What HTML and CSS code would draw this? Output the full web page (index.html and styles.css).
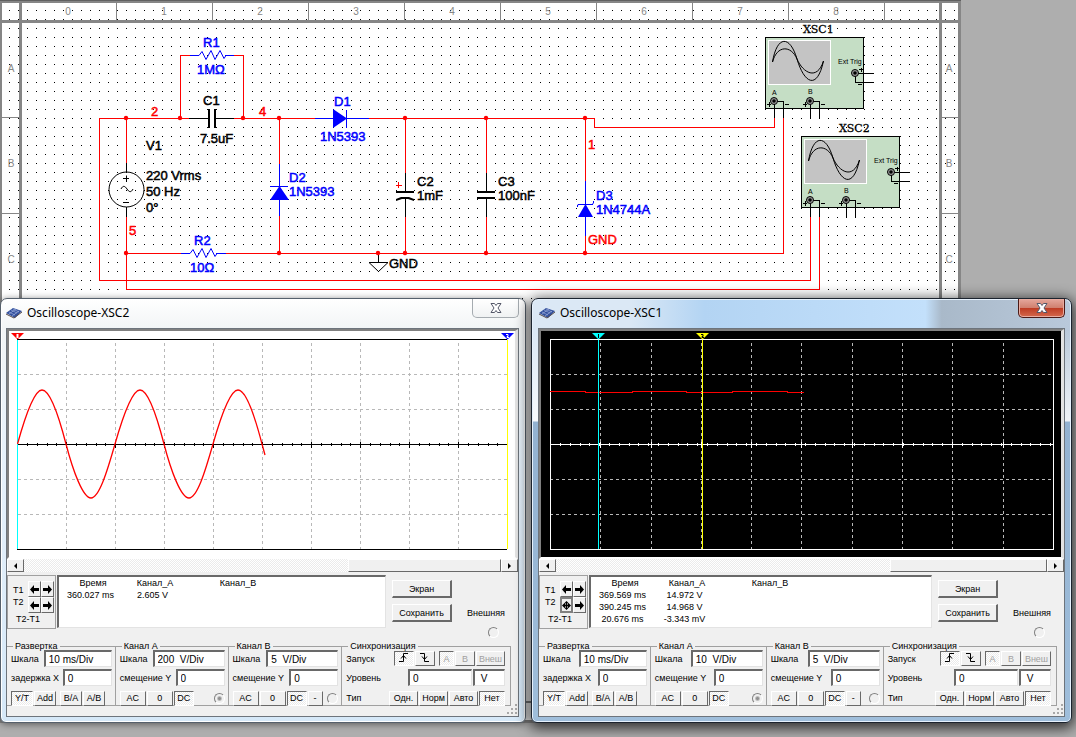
FILE: index.html
```
<!DOCTYPE html>
<html lang="ru">
<head>
    <meta charset="UTF-8">
    <title>Oscilloscope</title>
    <link rel="stylesheet" href="styles.css">
</head>
<body>

<main class="desktop">
    <!-- schematic sheet -->
    <svg class="sheet" width="961" height="723" viewBox="0 0 961 723">
        <defs>
            <pattern id="dots" x="-4" y="-4" width="9" height="9" patternUnits="userSpaceOnUse">
                <rect x="4" y="5" width="1" height="1" fill="#000" shape-rendering="crispEdges"/>
            </pattern>
            <g id="probe">
                <circle r="3.5" fill="#999" stroke="#000"/>
                <circle r="1.8" fill="#000"/>
            </g>
            <g id="scope">
                <rect x="0.5" y="0.5" width="98" height="71" fill="#c5dec5" stroke="#000"/>
                <rect x="3.5" y="3.5" width="62" height="44" fill="#c4c4c4" stroke="#fff"/>
                <path class="curve" d="M7.5 25 C12 -2 25 -2 32 22 S52 54 58.5 24"/>
                <path class="curve" d="M7.5 25 C12 8 26 8 32 22 S52 44 58.5 24"/>
                <path class="pin" d="M9.5 64V81M9 64.5H18.5V81M45.5 64V82M45 64.5H54.5V82M90 36.5H109M90.5 36V45.5H109"/>
                <use href="#probe" x="9" y="64"/>
                <use href="#probe" x="45" y="64"/>
                <use href="#probe" x="90" y="36"/>
                <path class="pin" d="M2 67.5h4M4.5 65v5M20 67.5h4M38 67.5h4M40.5 65v5M56 67.5h4M94 32.5h4M96.5 31v4M93 47.5h4"/>
                <text class="tiny" x="7" y="58">A</text>
                <text class="tiny" x="43" y="57">B</text>
                <text class="tiny" x="73" y="27">Ext Trig</text>
            </g>
        </defs>

        <rect width="961" height="723" fill="#868686"/>
        <rect x="2" y="3" width="17" height="17" fill="#fff"/>
        <rect x="22" y="3" width="917" height="17" fill="#fff"/>
        <rect x="942" y="3" width="16" height="17" fill="#fff"/>
        <rect x="2" y="23" width="17" height="678" fill="#fff"/>
        <rect x="22" y="23" width="917" height="678" fill="#fff"/>
        <rect x="942" y="23" width="16" height="678" fill="#fff"/>
        <rect x="2" y="703" width="956" height="17" fill="#fff"/>
        <rect x="2" y="3" width="956" height="717" fill="url(#dots)"/>
        <path class="frame" d="M20.5 3V720M940.5 3V720M2 21.5H958"/>
        <path class="tick" d="M116.5 3V20M212.5 3V20M308.5 3V20M404.5 3V20M500.5 3V20M596.5 3V20M692.5 3V20M788.5 3V20M884.5 3V20M2 117.5H19M2 213.5H19M942 117.5H958M942 213.5H958"/>
        <rect width="961" height="1" fill="#606060"/>

        <g class="ruler">
            <text x="68" y="15">0</text><text x="164" y="15">1</text><text x="260" y="15">2</text>
            <text x="356" y="15">3</text><text x="452" y="15">4</text><text x="548" y="15">5</text>
            <text x="644" y="15">6</text><text x="740" y="15">7</text><text x="836" y="15">8</text>
            <text x="11" y="72">A</text><text x="11" y="167">B</text><text x="11" y="263">C</text>
            <text x="949" y="72">A</text><text x="949" y="167">B</text><text x="949" y="263">C</text>
        </g>

        <!-- wires -->
        <path class="wire red" d="M189 118.5H99.5V280.5H810.5V217M126.5 118V163M126.5 217V289.5H819.5V217M126 253.5H181M226 253.5H783.5V117M180.5 118V55.5H190M234 55.5H243.5V118M234 118.5H315M369 118.5H594.5V127.5H774.5V117M279.5 118V164M279.5 216V253M405.5 118V173M405.5 217V253M486.5 118V173M486.5 217V253M585.5 118V181M585.5 236V253"/>
        <path class="wire blue" d="M190 55.5H199M225 55.5H234M181 253.5H190M216 253.5H226M315 118.5H369M279.5 164V216M585.5 181V236M346.5 110V128M270 186.5H288M578 204.5H593"/>
        <path class="wire black" d="M189 118.5H208M216 118.5H234M126.5 163V172M126.5 207V217M405.5 173V191M405.5 199V217M486.5 173V191M486.5 199V217M378.5 254V262"/>
        <path class="thin blue" d="M199 55.5l3-4 4 8 5-9 4 9 5-9 4 8 2-3M190 253.5l3-4 4 8 5-9 4 9 5-9 4 8 2-3M577.5 207V205L579 204.5M592 204.5L593.5 203V201"/>
        <path fill="#00f" d="M333 109L347 118.5L333 128ZM279.500 186L289 200H270ZM585.500 204L593 217H578Z"/>
        <path fill="#000" d="M208 109h2v19h-2zM214 109h2v19h-2zM396 191h18v2h-18zM477 191h18v2h-18zM477 197h18v2h-18zM396 201v-2l5-2h8l5 2v2l-6-2h-6z"/>
        <circle class="thin black" cx="126.500" cy="189.500" r="17.500"/>
        <path class="thin black" d="M123 178.500h6M126.500 175.500v6M123 202.500h6M121 189c2-4 4-3 6 0s4 4 6 0M369 262.500H388L378.500 271.500Z"/>
        <path class="wire red" d="M396 185.500h6M398.500 182v6"/>
        <g fill="#f00">
            <circle cx="126" cy="118" r="2.200"/><circle cx="180" cy="118" r="2.200"/><circle cx="243" cy="118" r="2.200"/>
            <circle cx="279" cy="118" r="2.200"/><circle cx="405" cy="118" r="2.200"/><circle cx="486" cy="118" r="2.200"/>
            <circle cx="585" cy="118" r="2.200"/><circle cx="126" cy="253" r="2.200"/><circle cx="279" cy="253" r="2.200"/>
            <circle cx="378" cy="253" r="2.200"/><circle cx="405" cy="253" r="2.200"/><circle cx="486" cy="253" r="2.200"/>
            <circle cx="585" cy="253" r="2.200"/>
        </g>

        <g class="part part-blue">
            <text x="203" y="47">R1</text><text x="197" y="74">1MΩ</text>
            <text x="334" y="106">D1</text><text x="320" y="141">1N5393</text>
            <text x="289" y="182">D2</text><text x="289" y="196">1N5393</text>
            <text x="194" y="245">R2</text><text x="190" y="272">10Ω</text>
            <text x="596" y="200">D3</text><text x="596" y="214">1N4744A</text>
        </g>
        <g class="part part-black">
            <text x="203" y="105">C1</text><text x="200" y="143">7.5uF</text>
            <text x="146" y="150">V1</text><text x="146" y="180">220 Vrms</text>
            <text x="146" y="196">50 Hz</text><text x="146" y="212">0°</text>
            <text x="417" y="186">C2</text><text x="417" y="200">1mF</text>
            <text x="498" y="186">C3</text><text x="498" y="200">100nF</text>
            <text x="389" y="268">GND</text>
        </g>
        <g class="part part-red">
            <text x="151" y="116">2</text><text x="259" y="116">4</text><text x="129" y="235">5</text>
            <text x="588" y="149">1</text><text x="588" y="244">GND</text>
        </g>

        <use href="#scope" x="765" y="37"/>
        <use href="#scope" x="801" y="136"/>
        <text class="device" x="803" y="33">XSC1</text>
        <text class="device" x="839" y="132">XSC2</text>
    </svg>

    <section class="window window-xsc2">
        <header class="titlebar">
            <svg class="app-icon" width="16" height="12" viewBox="0 0 16 12">
                <path d="M0 6L7 1L16 4L9 11Z" fill="#33509c"/>
                <path d="M3 5l6 3M5 3l6 3M7 2l6 3M3 7l7-5M6 9l7-5" stroke="#a9bbe6" stroke-width="0.6" fill="none"/>
                <path d="M0 7L8 11L16 5" stroke="#554a4a" fill="none"/>
            </svg>
            <h2>Oscilloscope-XSC2</h2>
            <button class="close" aria-label="Закрыть">
                <svg width="12" height="10" viewBox="0 0 12 10"><path d="M1 .5H4.500L6 2.500L7.500 .5H11L8 5L11 9.500H7.500L6 7.500L4.500 9.500H1L4 5Z"/></svg>
            </button>
        </header>
        <div class="client">
            <div class="plot">
                <svg viewBox="0 0 506 226">
                    <path class="grid" d="M57.500 12V218M106.500 12V218M155.500 12V218M204.500 12V218M253.500 12V218M302.500 12V218M351.500 12V218M400.500 12V218M449.500 12V218M9 43.500H498M9 78.500H498M9 148.500H498M9 183.500H498"/>
                    <path class="axis" d="M8 8.500H498M8 218.500H498M8 113.500H498"/>
                    <path class="axis ticks" d="M18 113.500H498"/>
                    <path class="axis" d="M57.500 111v6M106.500 111v6M155.500 111v6M204.500 111v6M253.500 111v6M302.500 111v6M351.500 111v6M400.500 111v6M449.500 111v6"/>
                    <path class="cursor cyan" d="M8.500 9V218"/>
                    <path class="cursor yellow" d="M498.500 9V218"/>
                    <path class="trace" d="M8.500 113C16 86 25 59 33 59S50 86 57 113S74 167 82 167S98 141 106 113S123 59 131 59S148 86 155 113S172 167 180 167S196 141 204 113S221 59 229 59S246 86 253 113L256 124"/>
                    <path d="M2 2H15L8.500 8.500Z" fill="#f00"/><path d="M8.500 3v4" stroke="#fff" stroke-width="2"/>
                    <path d="M492 2H505L498.500 8.500Z" fill="#00f"/><path d="M497 3.500h2v2h-1v1h2" stroke="#fff" fill="none"/>
                </svg>
            </div>
            <div class="scroll">
                <button aria-label="Влево"><svg width="5" height="6" viewBox="0 0 5 6"><path d="M4 0V6L1 3Z"/></svg></button>
                <div class="track"><div class="thumb"></div></div>
                <button aria-label="Вправо"><svg width="5" height="6" viewBox="0 0 5 6"><path d="M1 0V6L4 3Z"/></svg></button>
            </div>

            <div class="measure">
                <div class="markers">
                    <div class="marker-names"><span>T1</span><span>T2</span></div>
                    <div class="arrows">
                        <button aria-label="T1 влево"><svg width="9" height="9" viewBox="0 0 9 9"><path d="M0 4.500L4 0V3H9V6H4V9Z"/></svg></button>
                        <button aria-label="T1 вправо"><svg width="9" height="9" viewBox="0 0 9 9"><path d="M9 4.500L5 0V3H0V6H5V9Z"/></svg></button>
                        <button aria-label="T2 влево"><svg width="9" height="9" viewBox="0 0 9 9"><path d="M0 4.500L4 0V3H9V6H4V9Z"/></svg></button>
                        <button aria-label="T2 вправо"><svg width="9" height="9" viewBox="0 0 9 9"><path d="M9 4.500L5 0V3H0V6H5V9Z"/></svg></button>
                    </div>
                    <span class="delta">T2-T1</span>
                </div>
                <div class="readout">
                    <table>
                        <tr><th>Время</th><th>Канал_A</th><th>Канал_B</th></tr>
                        <tr><td>360.027 ms</td><td>2.605 V</td><td></td></tr>
                    </table>
                </div>
                <div class="actions">
                    <button>Экран</button>
                    <button>Сохранить</button>
                </div>
                <div class="external">
                    <label for="ext2">Внешняя</label>
                    <input type="radio" id="ext2" name="ext2">
                </div>
            </div>

            <div class="groups">
                <fieldset>
                    <legend>Развертка</legend>
                    <div class="row"><label for="tb2">Шкала</label><input class="w68" id="tb2" value="10 ms/Div"></div>
                    <div class="row"><label for="tx2">задержка X</label><input class="w49" id="tx2" value="0"></div>
                    <div class="row keys">
                        <button class="w22 on">Y/T</button><button class="w22">Add</button>
                        <button class="w22 gap">B/A</button><button class="w22">A/B</button>
                    </div>
                </fieldset>
                <fieldset>
                    <legend>Канал A</legend>
                    <div class="row"><label for="as2">Шкала</label><input class="w72" id="as2" value="200  V/Div"></div>
                    <div class="row"><label for="ay2">смещение Y</label><input class="w49" id="ay2" value="0"></div>
                    <div class="row keys">
                        <button class="w26">AC</button><button class="w26">0</button><button class="w20 on">DC</button>
                        <input type="radio" name="trig2" aria-label="Канал A" checked disabled>
                    </div>
                </fieldset>
                <fieldset>
                    <legend>Канал B</legend>
                    <div class="row"><label for="bs2">Шкала</label><input class="w72" id="bs2" value="5  V/Div"></div>
                    <div class="row"><label for="by2">смещение Y</label><input class="w49" id="by2" value="0"></div>
                    <div class="row keys">
                        <button class="w26">AC</button><button class="w26">0</button><button class="w20 on">DC</button><button class="w15">-</button>
                        <input type="radio" name="trig2" aria-label="Канал B">
                    </div>
                </fieldset>
                <fieldset class="sync">
                    <legend>Синхронизация</legend>
                    <div class="row"><span>Запуск</span>
                        <div class="set">
                            <button class="w20 on" aria-label="Фронт"><svg width="10" height="9" viewBox="0 0 10 9"><path class="edge" d="M0 8.500H4.500V.5H9M2 5.500L4.500 2.500L7 5.500"/></svg></button>
                            <button class="w20" aria-label="Спад"><svg width="10" height="9" viewBox="0 0 10 9"><path class="edge" d="M0 .5H4.500V8.500H9M2 3.500L4.500 6.500L7 3.500"/></svg></button>
                            <button class="w15 on gap" disabled>A</button><button class="w20" disabled>B</button><button class="w29" disabled>Внеш</button>
                        </div>
                    </div>
                    <div class="row"><label for="lv2">Уровень</label>
                        <div class="set"><input class="w64" id="lv2" value="0"><input class="w32" aria-label="Единицы" value=" V"></div>
                    </div>
                    <div class="row keys"><span>Тип</span>
                        <div class="set">
                            <button class="w29">Одн.</button><button class="w29">Норм</button><button class="w29">Авто</button><button class="w26 on">Нет</button>
                        </div>
                    </div>
                </fieldset>
            </div>
            <svg class="grip" width="12" height="12" viewBox="0 0 12 12"><path d="M9 0h2v2h-2zM5 4h2v2h-2zM9 4h2v2h-2zM1 8h2v2h-2zM5 8h2v2h-2zM9 8h2v2h-2z"/></svg>
        </div>
    </section>

    <section class="window window-xsc1 active">
        <header class="titlebar">
            <svg class="app-icon" width="16" height="12" viewBox="0 0 16 12">
                <path d="M0 6L7 1L16 4L9 11Z" fill="#33509c"/>
                <path d="M3 5l6 3M5 3l6 3M7 2l6 3M3 7l7-5M6 9l7-5" stroke="#a9bbe6" stroke-width="0.6" fill="none"/>
                <path d="M0 7L8 11L16 5" stroke="#554a4a" fill="none"/>
            </svg>
            <h2>Oscilloscope-XSC1</h2>
            <button class="close" aria-label="Закрыть">
                <svg width="12" height="10" viewBox="0 0 12 10"><path d="M1 .5H4.500L6 2.500L7.500 .5H11L8 5L11 9.500H7.500L6 7.500L4.500 9.500H1L4 5Z"/></svg>
            </button>
        </header>
        <div class="client">
            <div class="plot dark">
                <svg viewBox="0 0 520 226">
                    <rect width="520" height="226" fill="#000"/>
                    <path class="grid" d="M59.500 12V218M110.500 12V218M160.500 12V218M210.500 12V218M260.500 12V218M311.500 12V218M361.500 12V218M411.500 12V218M462.500 12V218M9 43.500H512M9 78.500H512M9 148.500H512M9 183.500H512"/>
                    <path class="axis" d="M9.500 8.500H512.500V218.500H9.500ZM9 113.500H512"/>
                    <path class="axis ticks" d="M19 113.500H512"/>
                    <path class="axis" d="M59.500 111v6M110.500 111v6M160.500 111v6M210.500 111v6M260.500 111v6M311.500 111v6M361.500 111v6M411.500 111v6M462.500 111v6"/>
                    <path class="trace flat" d="M9 60.500H44V61.500H91V60.500H145V61.500H191V60.500H246V61.500H263"/>
                    <path class="cursor cyan" d="M57.500 9V218"/>
                    <path class="cursor yellow" d="M161.500 9V218"/>
                    <path d="M51 2H64L57.500 8.500Z" fill="#0ff"/><path d="M57.500 3v4" stroke="#000"/>
                    <path d="M155 2H168L161.500 8.500Z" fill="#ff0"/><path d="M160 3.500h2v2h-1v1h2" stroke="#000" fill="none"/>
                </svg>
            </div>
            <div class="scroll">
                <button aria-label="Влево"><svg width="5" height="6" viewBox="0 0 5 6"><path d="M4 0V6L1 3Z"/></svg></button>
                <div class="track"><div class="thumb"></div></div>
                <button aria-label="Вправо"><svg width="5" height="6" viewBox="0 0 5 6"><path d="M1 0V6L4 3Z"/></svg></button>
            </div>

            <div class="measure">
                <div class="markers">
                    <div class="marker-names"><span>T1</span><span>T2</span></div>
                    <div class="arrows">
                        <button aria-label="T1 влево"><svg width="9" height="9" viewBox="0 0 9 9"><path d="M0 4.500L4 0V3H9V6H4V9Z"/></svg></button>
                        <button aria-label="T1 вправо"><svg width="9" height="9" viewBox="0 0 9 9"><path d="M9 4.500L5 0V3H0V6H5V9Z"/></svg></button>
                        <button class="focused" aria-label="T2 влево"><svg width="9" height="9" viewBox="0 0 9 9"><path d="M0 4.500L4.500 0L9 4.500L4.500 9Z"/><path d="M3 2.500h1v1h-1zM5 2.500h1v1h-1zM3 5.500h1v1h-1zM5 5.500h1v1h-1z" fill="#fff"/></svg></button>
                        <button aria-label="T2 вправо"><svg width="9" height="9" viewBox="0 0 9 9"><path d="M9 4.500L5 0V3H0V6H5V9Z"/></svg></button>
                    </div>
                    <span class="delta">T2-T1</span>
                </div>
                <div class="readout">
                    <table>
                        <tr><th>Время</th><th>Канал_A</th><th>Канал_B</th></tr>
                        <tr><td>369.569 ms</td><td>14.972 V</td><td></td></tr>
                        <tr><td>390.245 ms</td><td>14.968 V</td><td></td></tr>
                        <tr><td>20.676 ms</td><td>-3.343 mV</td><td></td></tr>
                    </table>
                </div>
                <div class="actions">
                    <button>Экран</button>
                    <button>Сохранить</button>
                </div>
                <div class="external">
                    <label for="ext1">Внешняя</label>
                    <input type="radio" id="ext1" name="ext1">
                </div>
            </div>

            <div class="groups">
                <fieldset>
                    <legend>Развертка</legend>
                    <div class="row"><label for="tb1">Шкала</label><input class="w68" id="tb1" value="10 ms/Div"></div>
                    <div class="row"><label for="tx1">задержка X</label><input class="w49" id="tx1" value="0"></div>
                    <div class="row keys">
                        <button class="w22 on">Y/T</button><button class="w22">Add</button>
                        <button class="w22 gap">B/A</button><button class="w22">A/B</button>
                    </div>
                </fieldset>
                <fieldset>
                    <legend>Канал A</legend>
                    <div class="row"><label for="as1">Шкала</label><input class="w72" id="as1" value="10  V/Div"></div>
                    <div class="row"><label for="ay1">смещение Y</label><input class="w49" id="ay1" value="0"></div>
                    <div class="row keys">
                        <button class="w26">AC</button><button class="w26">0</button><button class="w20 on">DC</button>
                        <input type="radio" name="trig1" aria-label="Канал A" checked disabled>
                    </div>
                </fieldset>
                <fieldset>
                    <legend>Канал B</legend>
                    <div class="row"><label for="bs1">Шкала</label><input class="w72" id="bs1" value="5  V/Div"></div>
                    <div class="row"><label for="by1">смещение Y</label><input class="w49" id="by1" value="0"></div>
                    <div class="row keys">
                        <button class="w26">AC</button><button class="w26">0</button><button class="w20 on">DC</button><button class="w15">-</button>
                        <input type="radio" name="trig1" aria-label="Канал B">
                    </div>
                </fieldset>
                <fieldset class="sync">
                    <legend>Синхронизация</legend>
                    <div class="row"><span>Запуск</span>
                        <div class="set">
                            <button class="w20 on" aria-label="Фронт"><svg width="10" height="9" viewBox="0 0 10 9"><path class="edge" d="M0 8.500H4.500V.5H9M2 5.500L4.500 2.500L7 5.500"/></svg></button>
                            <button class="w20" aria-label="Спад"><svg width="10" height="9" viewBox="0 0 10 9"><path class="edge" d="M0 .5H4.500V8.500H9M2 3.500L4.500 6.500L7 3.500"/></svg></button>
                            <button class="w15 on gap" disabled>A</button><button class="w20" disabled>B</button><button class="w29" disabled>Внеш</button>
                        </div>
                    </div>
                    <div class="row"><label for="lv1">Уровень</label>
                        <div class="set"><input class="w64" id="lv1" value="0"><input class="w32" aria-label="Единицы" value=" V"></div>
                    </div>
                    <div class="row keys"><span>Тип</span>
                        <div class="set">
                            <button class="w29">Одн.</button><button class="w29">Норм</button><button class="w29">Авто</button><button class="w26 on">Нет</button>
                        </div>
                    </div>
                </fieldset>
            </div>
            <svg class="grip" width="12" height="12" viewBox="0 0 12 12"><path d="M9 0h2v2h-2zM5 4h2v2h-2zM9 4h2v2h-2zM1 8h2v2h-2zM5 8h2v2h-2zM9 8h2v2h-2z"/></svg>
        </div>
    </section>
</main>

</body>
</html>
```
FILE: styles.css
```
* {
    box-sizing: border-box;
    margin: 0;
    padding: 0;
}

body {
    font-family: "Liberation Sans", Arial, sans-serif;
    font-size: 9px;
    line-height: 12px;
    color: #000;
    background-color: #aeaeae;
}

.desktop {
    position: relative;
    min-height: 100vh;
    overflow: hidden;
}

/* schematic */
.sheet {
    display: block;
}

.frame {
    stroke: #868686;
    stroke-width: 3;
}

.tick {
    stroke: #868686;
}

.ruler {
    font-size: 10px;
    fill: #868686;
    text-anchor: middle;
}

.wire {
    fill: none;
    shape-rendering: crispEdges;
}

.thin {
    fill: none;
}

.red {
    stroke: #f00;
}

.blue {
    stroke: #00f;
}

.black {
    stroke: #000;
}

.part {
    font-size: 13px;
    stroke-width: 0.5;
}

.part-blue {
    fill: #00f;
    stroke: #00f;
}

.part-black {
    fill: #000;
    stroke: #000;
}

.part-red {
    fill: #f00;
    stroke: #f00;
}

.curve {
    fill: none;
    stroke: #000;
}

.pin {
    fill: none;
    stroke: #000;
    shape-rendering: crispEdges;
}

.tiny {
    font-size: 7px;
}

.device {
    font-family: "DejaVu Serif", serif;
    font-size: 11px;
    stroke: #000;
    stroke-width: 0.3;
}

/* windows */
.window {
    position: absolute;
    top: 298px;
    padding: 0 6px 5px 5px;
    border: 1px solid #55606c;
    border-radius: 7px 7px 6px 6px;
    background: linear-gradient(#fff, #f2f5f6 29px, #e6f1fb 40%, #d5e8f8);
    box-shadow: 0 1px 7px rgba(0, 0, 0, 0.5), inset 0 0 0 1px #fff;
}

.window-xsc2 {
    left: 0;
    width: 526px;
}

.window-xsc1 {
    left: 531px;
    width: 541px;
}

.active {
    padding: 0 6px 5px 6px;
    border-color: #1b232e;
    background: linear-gradient(transparent 30px, rgba(255, 255, 255, 0.8) 122px, #93b2d1 123px, #9fbedb), linear-gradient(90deg, #dbe8f5, #dbe8f5 18%, #b3d4f3 32%, #c3e0fb 73%, #a9b9c9 76%, #b9c9db);
    box-shadow: 0 3px 14px 2px rgba(0, 0, 0, 0.75), inset 0 0 0 1px #e6f1fc;
}

.titlebar {
    display: flex;
    align-items: flex-start;
    height: 29px;
}

.app-icon {
    margin-top: 8px;
}

.window-xsc1 .app-icon {
    margin-left: 1px;
}

.titlebar h2 {
    flex: 1;
    margin-left: 5px;
    font-family: "Noto Sans", "Segoe UI", sans-serif;
    font-size: 12px;
    font-weight: normal;
    line-height: 28px;
}

.close {
    display: flex;
    align-items: center;
    justify-content: center;
    width: 47px;
    height: 19px;
    border: 1px solid #a5abb0;
    border-top: none;
    border-radius: 0 0 5px 5px;
    background: linear-gradient(#fff, #f0f2f3);
}

.close path {
    fill: #fff;
    stroke: #545869;
}

.active .close {
    border-color: #4b1a17;
    background: linear-gradient(#e5a79c, #d0806f 48%, #bd3a22 50%, #d4694d);
    box-shadow: inset 0 0 0 1px #e9aca0;
}

.client {
    position: relative;
    height: 389px;
    border: 1px solid #6d747c;
    background-color: #f0f0f0;
}

.plot {
    border: 2px solid #808080;
    border-right: 3px solid #e3e3e3;
    border-bottom-color: #fff;
    background-color: #fff;
}

.plot svg {
    display: block;
    width: 100%;
}

.grid {
    fill: none;
    stroke: #b8b8b8;
    stroke-dasharray: 3 3;
    shape-rendering: crispEdges;
}

.axis {
    fill: none;
    stroke: #000;
    shape-rendering: crispEdges;
}

.dark .axis {
    stroke: #fff;
}

.ticks {
    stroke-width: 3;
    stroke-dasharray: 1 8.8;
}

.cursor {
    fill: none;
    shape-rendering: crispEdges;
}

.dark .cursor {
    stroke-width: 1.5;
}

.cyan {
    stroke: #0ff;
}

.yellow {
    stroke: #ff0;
}

.trace {
    fill: none;
    stroke: #f00;
    stroke-width: 1.3;
}

.flat {
    stroke-width: 1;
    shape-rendering: crispEdges;
}

/* classic controls */
button {
    font-family: inherit;
    font-size: 9px;
    line-height: 10px;
    text-align: center;
    white-space: nowrap;
    color: #000;
    border: 1px solid #fff;
    border-right-color: #696969;
    border-bottom-color: #696969;
    background-color: #f0f0f0;
}

button:disabled {
    color: #a0a0a0;
}

.client input {
    font-family: inherit;
    font-size: 10px;
    height: 17px;
    padding: 0 3px;
    border: 2px solid #696969;
    border-right: 1px solid #e3e3e3;
    border-bottom: 1px solid #e3e3e3;
    background-color: #fff;
    white-space: pre;
}

.client input[type="radio"] {
    appearance: none;
    flex: none;
    width: 11px;
    height: 11px;
    padding: 0;
    border: 1px solid #808080;
    border-right-color: #fff;
    border-bottom-color: #fff;
    border-radius: 50%;
    background-color: #f0f0f0;
}

.client input[type="radio"]:checked {
    background: radial-gradient(circle, #909090 1px, #f0f0f0 3px);
}

.scroll {
    display: flex;
    height: 13px;
}

.scroll button {
    display: flex;
    align-items: center;
    justify-content: center;
    width: 17px;
}

.track {
    flex: 1;
    display: flex;
    justify-content: flex-end;
    background: repeating-conic-gradient(#fff 0 25%, #ebebeb 0 50%) 0 0 / 2px 2px;
}

.thumb {
    width: 32%;
    border: 1px solid #fff;
    border-right-color: #696969;
    border-bottom-color: #696969;
    background-color: #f0f0f0;
}

.measure {
    display: flex;
    height: 54px;
    margin-top: 3px;
}

.markers {
    display: grid;
    grid-template-columns: 20px 26px;
    align-content: start;
    width: 49px;
    padding: 5px 0 0;
    border: 1px solid #a0a0a0;
}

.marker-names {
    display: flex;
    flex-direction: column;
    padding: 3px 0 0 5px;
}

.arrows {
    display: grid;
    grid-template-columns: 13px 13px;
    grid-auto-rows: 16px;
}

.arrows button {
    display: flex;
    align-items: center;
    justify-content: center;
}

.arrows svg {
    flex: none;
}

.arrows .focused {
    border: 2px solid #808080;
}

.delta {
    grid-column: 1 / 3;
    padding-left: 8px;
}

.readout {
    flex: 1;
    height: 53px;
    margin-left: 1px;
    border: 2px solid #696969;
    border-right: 1px solid #e3e3e3;
    border-bottom: 1px solid #e3e3e3;
    background-color: #fff;
}

.readout table {
    width: 234px;
    table-layout: fixed;
    border-collapse: collapse;
}

.readout th,
.readout td {
    width: 56px;
    height: 12px;
    font-weight: normal;
    text-align: center;
}

.readout td {
    padding-right: 5px;
}

.readout th:first-child {
    width: 68px;
}

.readout th:last-child {
    width: 110px;
}

.actions {
    display: flex;
    flex-direction: column;
    gap: 6px;
    width: 60px;
    margin: 5px 0 0 6px;
}

.actions button {
    height: 18px;
    border-right-width: 2px;
    border-bottom-width: 2px;
}

.external {
    display: flex;
    flex-direction: column;
    align-items: center;
    gap: 8px;
    margin: 32px 13px 0 15px;
}

.external input {
    margin-left: 14px;
}

.groups {
    display: grid;
    grid-template-columns: 109fr 113fr 114fr 169fr;
    margin: 13px 7px 0 0;
}

fieldset {
    min-width: 0;
    border: 1px solid #a0a0a0;
    border-left: none;
}

legend {
    margin-left: 6px;
    padding: 0 2px;
    line-height: 8px;
}

.row {
    display: flex;
    align-items: center;
    justify-content: space-between;
    height: 17px;
    margin-bottom: 2px;
    padding: 0 3px 0 4px;
    white-space: nowrap;
}

.keys {
    justify-content: flex-start;
    gap: 1px;
    height: 14px;
    margin: 5px 0 0;
}

.keys button,
.set button {
    height: 15px;
}

.client .keys input {
    margin-left: auto;
}

.set {
    display: flex;
    gap: 1px;
    margin-left: auto;
}

.sync .row {
    padding-right: 5px;
}

.gap {
    margin-left: 3px;
}

.on {
    border-color: #696969 #fff #fff #696969;
    background: repeating-conic-gradient(#fff 0 25%, #ebebeb 0 50%) 0 0 / 2px 2px;
}

.edge {
    fill: none;
    stroke: #000;
}

.w15 { width: 15px; }
.w20 { width: 20px; }
.w22 { width: 22px; }
.w26 { width: 26px; }
.w29 { width: 29px; }
.w32 { width: 32px; }
.w49 { width: 49px; }
.w64 { width: 64px; }
.w68 { width: 68px; }
.w72 { width: 72px; }

.grip {
    position: absolute;
    right: 0;
    bottom: 0;
    fill: #a8a8a8;
}
```
